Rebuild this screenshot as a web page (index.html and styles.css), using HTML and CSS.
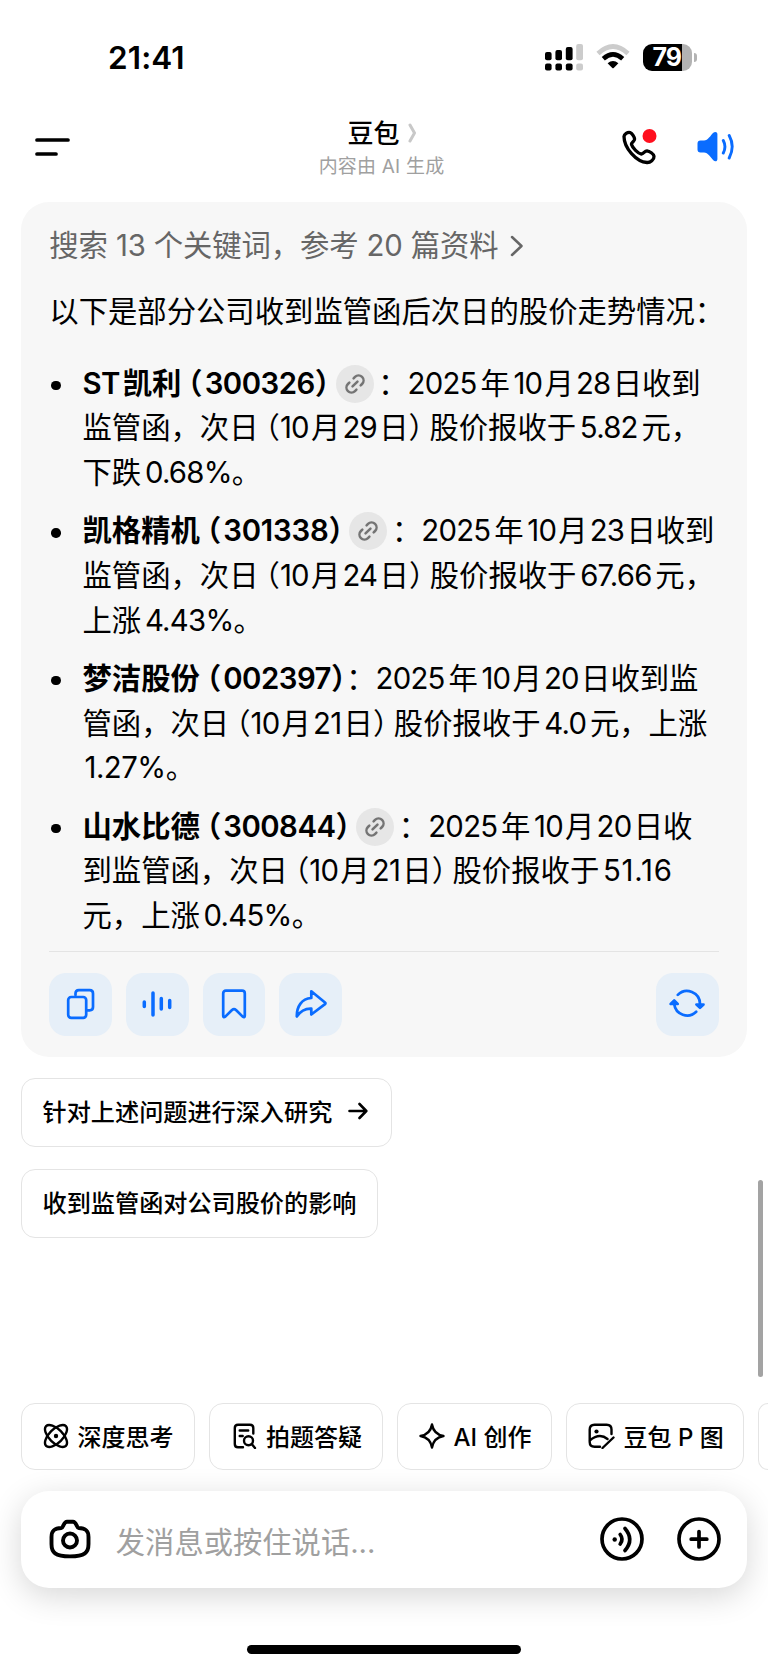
FILE: index.html
```html
<!DOCTYPE html>
<html lang="zh-CN">
<head>
    <meta charset="UTF-8">
    <meta name="viewport" content="width=device-width, initial-scale=1.0">
    <title>豆包</title>
    <link rel="stylesheet" href="styles.css">
</head>
<body>
    <svg width="0" height="0" class="defs">
        <symbol id="link" viewBox="0 0 24 24">
            <g transform="rotate(-45 12 12)" fill="none" stroke="#747474" stroke-width="2.5" stroke-linecap="round">
                <path d="M9 17H7A5 5 0 0 1 7 7h2M15 7h2a5 5 0 1 1 0 10h-2M8.5 12h7"/>
            </g>
        </symbol>
    </svg>

    <div class="status-bar">
        <div class="time">21:41</div>
        <div class="status-icons">
            <svg class="signal" width="38" height="27" viewBox="0 0 38 27">
                <rect x="0" y="8" width="6.6" height="8.2" rx="2"/>
                <rect x="10.4" y="6" width="6.6" height="10.2" rx="2"/>
                <rect x="20.8" y="3" width="6.8" height="13.2" rx="2"/>
                <rect x="31.2" y="0" width="6.8" height="16.2" rx="2" fill="#ccc"/>
                <rect x="0" y="19.4" width="6.6" height="7.2" rx="2"/>
                <rect x="10.4" y="19.4" width="6.6" height="7.2" rx="2"/>
                <rect x="20.8" y="19.4" width="6.8" height="7.2" rx="2"/>
                <rect x="31.2" y="19.4" width="6.8" height="7.2" rx="2" fill="#ccc"/>
            </svg>
            <svg class="wifi" width="34" height="26" viewBox="0 0 34 26">
                <path d="M2 9.5Q17-4.5 32 9.5" fill="none" stroke="#ccc" stroke-width="4.6"/>
                <path d="M7.3 14.7Q17 5.9 26.7 14.7" fill="none" stroke="#000" stroke-width="4.6"/>
                <path d="M11.6 19.2Q17 14.8 22.4 19.2L17.7 23.9Q17 24.5 16.3 23.9Z"/>
            </svg>
            <div class="battery"><span>79</span></div>
            <div class="battery-tip"></div>
        </div>
    </div>

    <div class="header">
        <svg class="menu" width="36" height="20" viewBox="0 0 36 20" stroke="#000" stroke-width="3.7" stroke-linecap="round">
            <path d="M2 3h31M2 17h19"/>
        </svg>
        <div class="title-box">
            <div class="title">豆包
                <svg width="9" height="20" viewBox="0 0 9 20"><path d="M2 2l4.500 8L2 18" fill="none" stroke="#c8c8c8" stroke-width="3" stroke-linecap="round" stroke-linejoin="round"/></svg>
            </div>
            <div class="subtitle">内容由 AI 生成</div>
        </div>
        <div class="header-icons">
            <svg width="36" height="38" viewBox="0 0 36 38">
                <path d="M3 8.500C3.200 6 6.500 4 9 4.500C11.300 5.500 13.400 9 13.600 11.200C13.700 13.300 10.200 14.300 10.500 16.500C11.500 19.800 17 25.500 20.300 26C22.600 26.200 23.600 22.700 26 22.800C28.500 23 32.700 26 33 28.300C33.300 31.500 29.300 34.700 26 34.500C15.500 34 3 20 3 8.500Z" fill="none" stroke="#000" stroke-width="3.300" stroke-linejoin="round"/>
                <circle cx="28.5" cy="8" r="7" fill="#ff0f1e"/>
            </svg>
            <svg width="38" height="32" viewBox="0 0 38 32">
                <path d="M3.500 9.500H7C11 9.500 13.500 4.500 16.300 1.800C18 .3 20.400 1 20.400 3V28C20.400 30.500 18 31 16.300 29.200C13.500 26.500 11 21.600 7 21.600H3.500Q.5 21.600 .5 18.600V12.500Q.5 9.500 3.500 9.500Z" fill="#0a6cff"/>
                <path d="M26.300 9.500Q29.600 15.700 26.300 22M32.200 4.500Q38.200 15.500 32.200 27" fill="none" stroke="#0a6cff" stroke-width="2.900" stroke-linecap="round"/>
            </svg>
        </div>
    </div>

    <div class="card">
        <div class="search-info">
            <span>搜索 13 个关键词，参考 20 篇资料</span>
            <svg width="14" height="22" viewBox="0 0 14 22"><path d="M2 2l9.500 9L2 20" fill="none" stroke="#666" stroke-width="2.500" stroke-linecap="round" stroke-linejoin="round"/></svg>
        </div>
        <p class="intro">以下是部分公司收到监管函后次日的股价走势情况：</p>
        <ul class="list">
            <li><b><span class="st">ST</span>凯利<i class="lp">（</i><span class="code">300326</span><i class="rp">）</i></b><span class="ref"><svg width="24" height="24"><use href="#link"/></svg></span><i class="colon">：</i><span class="n first">2025</span>年<span class="n m">10</span>月<span class="n d">28</span>日收到<br>监管函，次日<i class="lp">（</i><span class="n m first">10</span>月<span class="n d">29</span>日<i class="rp">）</i>股价报收于<span class="n">5.82</span>元，<br>下跌<span class="n last">0.68%</span>。</li>
            <li><b>凯格精机<i class="lp">（</i><span class="code wide">301338</span><i class="rp">）</i></b><span class="ref"><svg width="24" height="24"><use href="#link"/></svg></span><i class="colon">：</i><span class="n first">2025</span>年<span class="n m">10</span>月<span class="n d">23</span>日收到<br>监管函，次日<i class="lp">（</i><span class="n m first">10</span>月<span class="n d">24</span>日<i class="rp">）</i>股价报收于<span class="n">67.66</span>元，<br>上涨<span class="n last">4.43%</span>。</li>
            <li><b>梦洁股份<i class="lp">（</i><span class="code">002397</span><i class="rp close">）</i></b><i class="colon">：</i><span class="n first">2025</span>年<span class="n m">10</span>月<span class="n d">20</span>日收到监<br>管函，次日<i class="lp">（</i><span class="n m first">10</span>月<span class="n d">21</span>日<i class="rp">）</i>股价报收于<span class="n">4.0</span>元，上涨<br><span class="n start last">1.27%</span>。</li>
            <li><b>山水比德<i class="lp">（</i><span class="code">300844</span><i class="rp">）</i></b><span class="ref"><svg width="24" height="24"><use href="#link"/></svg></span><i class="colon">：</i><span class="n first">2025</span>年<span class="n m">10</span>月<span class="n d">20</span>日收<br>到监管函，次日<i class="lp">（</i><span class="n m first">10</span>月<span class="n d">21</span>日<i class="rp">）</i>股价报收于<span class="n wide">51.16</span><br>元，上涨<span class="n last">0.45%</span>。</li>
        </ul>
        <div class="actions">
            <button class="action">
                <svg width="30" height="32" viewBox="0 0 30 32">
                    <path d="M9.500 7V5.500Q9.500 2.200 12.800 2.200H23.700Q27 2.200 27 5.500V19Q27 22.300 23.700 22.300H21.500"/>
                    <rect x="2.200" y="9" width="18" height="20.800" rx="3"/>
                </svg>
            </button>
            <button class="action">
                <svg width="30" height="28" viewBox="0 0 30 28" class="bars"><path d="M2.300 12v4.500M11 3v22M19.300 8.500v10.500M27.700 10.500v7"/></svg>
            </button>
            <button class="action">
                <svg width="26" height="32" viewBox="0 0 26 32"><path d="M2.200 5.500Q2.200 2.700 5 2.700H21Q23.800 2.700 23.800 5.500V27.500Q23.800 30 21.700 28.600L15 22Q13 20.300 11 22L4.300 28.600Q2.200 30 2.200 27.500Z"/></svg>
            </button>
            <button class="action">
                <svg width="32" height="30" viewBox="0 0 32 30"><path d="M16.300 2.300L30 13.500Q31 14.300 30 15.200L16.300 25.500V19.600C9.500 19.300 5.500 22 1.800 27.500C1.600 18 6.500 9.500 16.300 9Z"/></svg>
            </button>
            <button class="action refresh">
                <svg width="36" height="30" viewBox="0 0 36 30">
                    <path d="M8.800 5.900A13 13 0 0 1 31 15M27.200 22.700A13 13 0 0 1 5.200 15"/>
                    <path d="M27.500 15.500h7L31 18.800ZM1.700 15h7L5.200 11.500Z" fill="#0a6cff"/>
                </svg>
            </button>
        </div>
    </div>

    <div class="suggestions">
        <button class="suggestion">针对上述问题进行深入研究
            <svg width="20" height="18" viewBox="0 0 20 18"><path d="M1.500 9h16.500M11.500 2L18.300 9L11.500 16"/></svg>
        </button>
        <button class="suggestion">收到监管函对公司股价的影响</button>
    </div>
    <div class="scrollbar"></div>

    <div class="bottom">
        <div class="chips">
            <button class="chip chip-think">
                <svg width="26" height="26" viewBox="0 0 26 26">
                    <ellipse cx="13" cy="13" rx="14" ry="6.800" transform="rotate(45 13 13)"/>
                    <ellipse cx="13" cy="13" rx="14" ry="6.800" transform="rotate(-45 13 13)"/>
                    <circle cx="13" cy="13" r="2.200" fill="#000" stroke="none"/>
                </svg>深度思考
            </button>
            <button class="chip chip-photo">
                <svg width="24" height="26" viewBox="0 0 24 26">
                    <path d="M10 24.300H5Q1.800 24.300 1.800 21V5Q1.800 1.700 5 1.700H17Q20.300 1.700 20.300 5V10.500M6.700 7.500h8.500M6.700 13h3"/>
                    <circle cx="15.500" cy="17.700" r="4.500"/><path d="M18.700 21l3.300 4"/>
                </svg>拍题答疑
            </button>
            <button class="chip chip-ai">
                <svg width="26" height="26" viewBox="0 0 26 26"><path d="M13 1.500Q14.700 11.300 24.500 13Q14.700 14.700 13 24.500Q11.300 14.700 1.500 13Q11.300 11.300 13 1.500Z"/></svg>AI 创作
            </button>
            <button class="chip chip-image">
                <svg width="27" height="26" viewBox="0 0 27 26">
                    <path d="M12 23.700H6.500Q1.700 23.700 1.700 19V6.500Q1.700 1.700 6.500 1.700H18.700Q23.500 1.700 23.500 6.500V11M1.700 17.500Q11.500 9.500 19.500 16M25.500 14.500L14.500 25"/>
                    <circle cx="8.500" cy="8.500" r="2.100" fill="#000" stroke="none"/>
                </svg>豆包 P 图
            </button>
            <button class="chip chip-more"></button>
        </div>
        <div class="input-bar">
            <svg width="42" height="40" viewBox="0 0 42 40" stroke-width="3.9">
                <path d="M12.300 9C14.500 8.800 14.500 2.700 18 2.700H24C27.500 2.700 27.500 8.800 29.700 9C36.500 9.200 39.500 11.500 39.500 18V25C39.500 33.500 36 37.400 21 37.400C6 37.400 2.500 33.500 2.500 25V18C2.500 11.500 5.500 9.200 12.300 9Z"/>
                <circle cx="21" cy="21.5" r="7"/>
            </svg>
            <div class="placeholder">发消息或按住说话...</div>
            <svg class="voice" width="44" height="44" viewBox="0 0 44 44" stroke-width="3.7">
                <circle cx="22" cy="22" r="20"/>
                <circle cx="14.700" cy="22.500" r="2.200" fill="#000" stroke="none"/>
                <path d="M20.200 17.500Q23.800 22.200 20.200 27M25 11.500Q34.500 22.500 25 33.500"/>
            </svg>
            <svg width="44" height="44" viewBox="0 0 44 44" stroke-width="3.7">
                <circle cx="22" cy="22" r="20"/><path d="M22 14.500v15.500M14.200 22.200h15.600"/>
            </svg>
        </div>
        <div class="home-indicator"></div>
    </div>
</body>
</html>
```

FILE: styles.css
```css
* { margin: 0; padding: 0; box-sizing: border-box; }
body {
    font-family: Inter, "Noto Sans CJK SC", sans-serif;
    background: #fff;
    color: #000;
    width: 768px; height: 1669px;
    display: flex;
    flex-direction: column;
    position: relative;
    overflow: hidden;
}
svg { display: block; flex-shrink: 0; }
.defs { position: absolute; }
i { font-style: normal; }
button { font-family: inherit; color: inherit; border: none; background: #fff; }

/* status bar */
.status-bar {
    height: 114px;
    display: flex;
    align-items: center;
    justify-content: space-between;
    padding: 0 71px 0 108px;
}
.time { font-size: 31.5px; font-weight: 600; letter-spacing: 0.1px; }
.status-icons { display: flex; align-items: center; }
.wifi { margin: 0 13px; }
.battery {
    width: 49px; height: 27px;
    border-radius: 9px;
    background: linear-gradient(to right, #000 39px, #b3b3b3 39px);
    color: #fff;
    font-size: 25px; font-weight: 700;
    line-height: 27px;
    padding-left: 9.5px;
    letter-spacing: -1px;
}
.battery-tip {
    width: 3px; height: 9px;
    margin-left: 2px;
    border-radius: 0 4px 4px 0;
    background: #b3b3b3;
}

/* header */
.header {
    height: 66px;
    display: flex;
    align-items: center;
    padding: 0 33px 0 35px;
}
.title-box { width: 170px; margin-left: 225.5px; padding-top: 3px; text-align: center; }
.title {
    font-size: 26px; font-weight: 500;
    line-height: 36px;
    display: flex; align-items: center; justify-content: center;
    gap: 8px;
    padding-left: 1px;
}
.title svg { margin-top: -2px; }
.subtitle { font-size: 19px; letter-spacing: 0.2px; line-height: 30px; color: #a0a0a0; }
.header-icons { display: flex; align-items: center; gap: 40px; margin-left: auto; }

/* answer card */
.card {
    width: 725.4px; height: 855px;
    margin: 21.7px 0 0 21.3px;
    padding: 22px 28px 21px;
    border-radius: 28px;
    background: #f7f7f7;
    font-size: 29.35px;
    line-height: 44.67px;
    white-space: nowrap;
}
.search-info { display: flex; align-items: center; color: #666; letter-spacing: -0.12px; }
.search-info svg { margin-left: 11px; }
.intro { margin-top: 22px; }
.list { list-style: none; margin-top: 26.7px; height: 576.5px; }
.list li { position: relative; padding-left: 33.2px; height: 134px; margin-bottom: 13.67px; }
.list li::before {
    content: "";
    position: absolute;
    left: 2px; top: 19px;
    width: 9.4px; height: 9.4px;
    border-radius: 50%;
    background: #000;
}
.list b { font-weight: 600; }

/* numbers get a little air next to the hanzi */
.n { letter-spacing: -0.75px; margin: 0 3.7px; }
.n.m { margin-right: 2px; }
.n.d { margin: 0 2.2px; }
.n.first { margin-left: 0; }
.n.last { margin-right: 0; }
.n.start { margin-left: 2px; letter-spacing: -0.5px; }
.n.wide { letter-spacing: 0.8px; }
.st { margin-right: 2.7px; letter-spacing: -0.5px; }
.code { letter-spacing: -0.5px; }
.code.wide { letter-spacing: -0.2px; }

/* half-width brackets */
.lp, .rp { font-feature-settings: "halt"; }
.lp { margin-left: 6.7px; }
b .lp { margin-right: 2px; }
.rp { margin-right: 6.2px; }
b .rp { margin-right: 5.2px; }
b .rp.close { margin-right: -4px; }
.ref {
    display: inline-flex;
    align-items: center; justify-content: center;
    width: 38px; height: 38px;
    border-radius: 50%;
    background: #e6e6e6;
    vertical-align: middle;
    margin: -4px 0 0 1px;
}
.colon { margin-left: 4.5px; }
.actions {
    display: flex;
    gap: 14px;
    margin-top: 12.8px;
    padding-top: 21px;
    border-top: 1px solid #e4e4e4;
}
.action {
    width: 62.7px; height: 62.7px;
    border-radius: 17px;
    background: #e6eff8;
    display: flex; align-items: center; justify-content: center;
}
.action svg { fill: none; stroke: #0a6cff; stroke-width: 2.7; stroke-linecap: round; stroke-linejoin: round; }
.action svg.bars { stroke-width: 3.5; }
.refresh { margin-left: auto; }

/* suggestions */
.suggestions {
    display: flex; flex-direction: column;
    align-items: flex-start;
    gap: 22px;
    padding: 21.3px 0 0 21.3px;
}
.suggestion {
    height: 68.8px;
    padding: 0 20.3px 4px;
    border: 1.5px solid #e4e4e4;
    border-radius: 14px;
    font-size: 24.15px; font-weight: 500;
    display: flex; align-items: center;
}
.suggestion svg { margin: 2px 2.5px 0 16px; fill: none; stroke: #000; stroke-width: 2.6; stroke-linecap: round; stroke-linejoin: round; }
.scrollbar {
    position: absolute;
    right: 5.5px; top: 1180px;
    width: 5px; height: 197px;
    border-radius: 3px;
    background: #a3a3a3;
}

/* bottom */
.bottom { margin-top: auto; height: 266px; }
.chips { display: flex; gap: 14px; padding-left: 21px; overflow: hidden; }
.chip {
    height: 66.5px;
    border: 1.5px solid #e4e4e4;
    border-radius: 14px;
    font-size: 24px; font-weight: 500;
    display: flex; align-items: center;
    gap: 9px;
    padding: 0 0 2px 20.5px;
    white-space: nowrap;
    flex-shrink: 0;
}
.chip svg { margin-top: 2px; fill: none; stroke: #000; stroke-width: 2.4; stroke-linecap: round; stroke-linejoin: round; }
.chip-think { width: 174px; }
.chip-photo { width: 174px; padding-left: 23px; }
.chip-ai { width: 155px; }
.chip-image { width: 178px; }
.chip-more { flex: 1 1 0; border-right: none; border-radius: 14px 0 0 14px; padding: 0; }
.input-bar {
    width: 725.4px; height: 97.4px;
    margin: 21px 0 0 21.3px;
    padding: 0 26px 0 27.5px;
    border-radius: 28px;
    background: #fff;
    box-shadow: 0 8px 32px rgba(0, 0, 0, 0.16);
    display: flex; align-items: center;
}
.input-bar svg { fill: none; stroke: #000; stroke-linecap: round; }
.placeholder { flex-grow: 1; margin-left: 25px; margin-top: 1px; font-size: 29.3px; color: #a0a0a0; }
.voice { margin-right: 33px; }
.home-indicator {
    width: 274px; height: 9px;
    margin: 57.5px auto 0;
    border-radius: 5px;
    background: #000;
}
```
